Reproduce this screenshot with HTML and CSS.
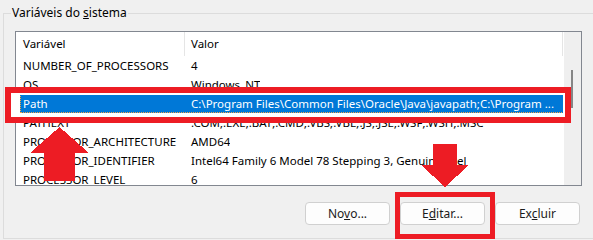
FILE: index.html
```html
<!DOCTYPE html>
<html lang="pt-BR">
<head>
  <meta charset="UTF-8">
  <title>Variáveis do sistema</title>
  <link rel="stylesheet" href="styles.css">
</head>
<body>

  <div class="group">
    <span class="group-title">Variáveis do <u>s</u>istema</span>

    <div class="list">
      <div class="list-main">
        <div class="list-head">
          <div class="head-name">Variável</div>
          <div class="head-value">Valor</div>
        </div>
        <div class="row"><span class="cell-name">NUMBER_OF_PROCESSORS</span><span class="cell-value">4</span></div>
        <div class="row"><span class="cell-name">OS</span><span class="cell-value">Windows_NT</span></div>
        <div class="row selected"><span class="cell-name">Path</span><span class="cell-value">C:\Program Files\Common Files\Oracle\Java\javapath;C:\Program ...</span></div>
        <div class="row"><span class="cell-name">PATHEXT</span><span class="cell-value">.COM;.EXE;.BAT;.CMD;.VBS;.VBE;.JS;.JSE;.WSF;.WSH;.MSC</span></div>
        <div class="row"><span class="cell-name">PROCESSOR_ARCHITECTURE</span><span class="cell-value">AMD64</span></div>
        <div class="row"><span class="cell-name">PROCESSOR_IDENTIFIER</span><span class="cell-value">Intel64 Family 6 Model 78 Stepping 3, GenuineIntel</span></div>
        <div class="row"><span class="cell-name">PROCESSOR_LEVEL</span><span class="cell-value">6</span></div>
      </div>
      <div class="scrollbar"><div class="thumb"></div></div>
    </div>

    <div class="buttons">
      <button class="btn">No<u>v</u>o...</button>
      <button class="btn">E<u>d</u>itar...</button>
      <button class="btn">Ex<u>c</u>luir</button>
    </div>
  </div>

  <!-- Annotations drawn over the dialog -->
  <div class="mark mark-row"><div class="mark-gap"></div></div>
  <div class="mark mark-btn"></div>

  <svg class="arrow arrow-up" width="59" height="54" viewBox="0 0 59 54">
    <polygon points="29.5,0 59,26 45,26 45,54 14,54 14,26 0,26" fill="#ed1c24"/>
  </svg>
  <svg class="arrow arrow-down" width="48" height="43" viewBox="0 0 48 43">
    <polygon points="12,0 36,0 36,21 48,21 24,43 0,21 12,21" fill="#ed1c24"/>
  </svg>

</body>
</html>
```

FILE: styles.css
```css
body {
  margin: 0;
  position: relative;
  width: 593px;
  height: 240px;
  overflow: hidden;
  background-color: #f0f0f0;
  font-family: "Noto Sans", "Segoe UI", sans-serif;
  font-size: 12px;
  color: #000;
}

/* Group box */
.group {
  position: relative;
  margin: 13px 0 0 3px;
  width: 640px;
  border: 1px solid #dcdcdc;
  padding: 17px 0 13px 11px;
}

.group-title {
  position: absolute;
  top: -9px;
  left: 7px;
  padding: 0 1px;
  line-height: 16px;
  background-color: #f0f0f0;
}

/* List view */
.list {
  display: flex;
  width: 565px;
  height: 153px;
  border: 1px solid #828790;
  font-size: 11.5px;
}

.list-main {
  width: 548px;
  background-color: #fff;
  overflow: hidden;
}

.list-head {
  display: flex;
  height: 24px;
  line-height: 24px;
}

.head-name {
  width: 161px;
  padding-left: 7px;
  border-right: 1px solid #e5e5e5;
}

.head-value {
  width: 371px;
  padding-left: 6px;
  border-right: 1px solid #e5e5e5;
}

.row {
  display: flex;
  height: 19px;
  line-height: 19px;
  margin-left: 4px;
  white-space: nowrap;
}

.cell-name {
  width: 162px;
  padding-left: 3px;
  flex-shrink: 0;
  overflow: hidden;
}

.cell-value {
  padding-left: 6px;
  overflow: hidden;
}

.row.selected {
  background-color: #0078d7;
  color: #fff;
  outline: 1px dotted #f5a243;
  outline-offset: -1px;
}

.scrollbar {
  width: 17px;
  background-color: #efefef;
}

.thumb {
  width: 2px;
  height: 38px;
  margin: 38px 0 0 7px;
  background-color: #858585;
}

/* Buttons */
.buttons {
  display: flex;
  justify-content: flex-end;
  gap: 10px;
  width: 565px;
  margin-top: 16px;
}

.btn {
  width: 85px;
  height: 23px;
  padding: 0;
  font-family: inherit;
  font-size: 12px;
  color: #1b1b1b;
  background-color: #fdfdfd;
  border: 1px solid #d0d0d0;
  border-radius: 4px;
}

/* Red annotations */
.mark {
  position: absolute;
  box-sizing: border-box;
  border: 6px solid #ed1c24;
}

.mark-row {
  left: 5px;
  top: 87px;
  width: 566px;
  height: 36px;
}

.mark-gap {
  box-sizing: border-box;
  height: 100%;
  border-style: solid;
  border-color: #fff;
  border-width: 2px 2px 3px 9px;
}

.mark-btn {
  left: 395px;
  top: 192px;
  width: 100px;
  height: 47px;
  border-width: 5px;
}

.arrow {
  position: absolute;
  shape-rendering: crispEdges;
}

.arrow-up {
  left: 30px;
  top: 127px;
}

.arrow-down {
  left: 421px;
  top: 144px;
}
```
